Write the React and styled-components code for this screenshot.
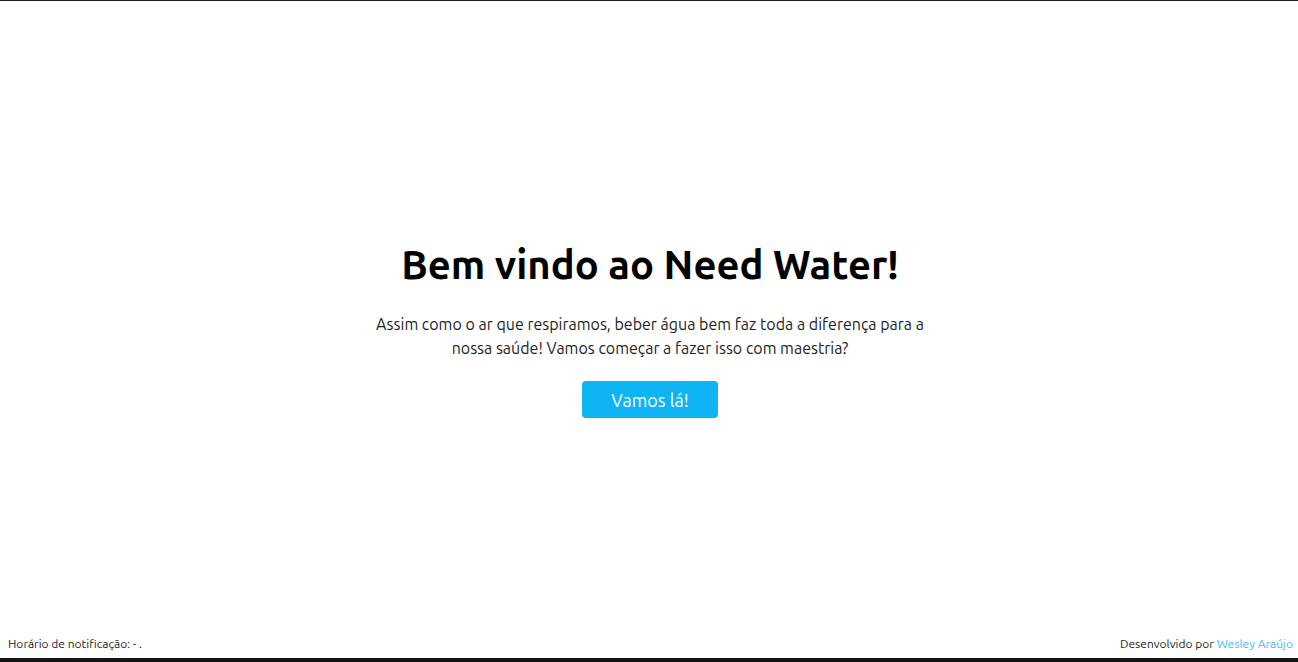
import React from 'react';
import styled, { createGlobalStyle } from 'styled-components';

const fontFamily = 'font-family: \'Ubuntu\', \'Lato\', \'Noto Sans\', sans-serif;';

const GlobalStyle = createGlobalStyle`
	html, body {
		margin: 0;
		padding: 0;
		height: 100%;
		background: #fff;
	}
	#root {
		height: 100%;
	}
	* {
		box-sizing: border-box;
	}
`;

const Page = styled.div`
	${fontFamily}
	display: flex;
	flex-direction: column;
	height: 100vh;
	border-top: 1px solid #222;
	border-bottom: 4px solid #141414;
`;

const Main = styled.main`
	flex: 1;
	display: flex;
	flex-direction: column;
	align-items: center;
	justify-content: center;
	padding: 22px 0 0 2px;
	text-align: center;
`;

const Title = styled.h1`
	margin: 0 0 23px;
	font-size: 40px;
	font-weight: 700;
	line-height: 48px;
	color: #000;
`;

const Intro = styled.p`
	margin: 0 0 21px;
	max-width: 560px;
	font-size: 16px;
	line-height: 24px;
	color: #1e1e1e;
`;

const StartButton = styled.button`
	${fontFamily}
	width: 136px;
	height: 37px;
	padding: 0;
	border: none;
	border-radius: 4px;
	background-color: #0fb4f5;
	color: #fff;
	font-size: 18px;
	cursor: pointer;
`;

const Footer = styled.footer`
	display: flex;
	justify-content: space-between;
	align-items: center;
	padding: 0 5px 6px 8px;
	font-size: 12px;
	line-height: 16px;
	color: #222;
`;

const AuthorLink = styled.a`
	color: #45baf0;
	text-decoration: none;
`;

export default function App() {
	return (
		<>
			<GlobalStyle />
			<Page>
				<Main>
					<Title>Bem vindo ao Need Water!</Title>
					<Intro>
						Assim como o ar que respiramos, beber água bem faz toda a diferença para a<br />
						nossa saúde! Vamos começar a fazer isso com maestria?
					</Intro>
					<StartButton>Vamos lá!</StartButton>
				</Main>
				<Footer>
					<span>Horário de notificação: - .</span>
					<span>
						Desenvolvido por <AuthorLink href="#">Wesley Araújo</AuthorLink>
					</span>
				</Footer>
			</Page>
		</>
	);
}
